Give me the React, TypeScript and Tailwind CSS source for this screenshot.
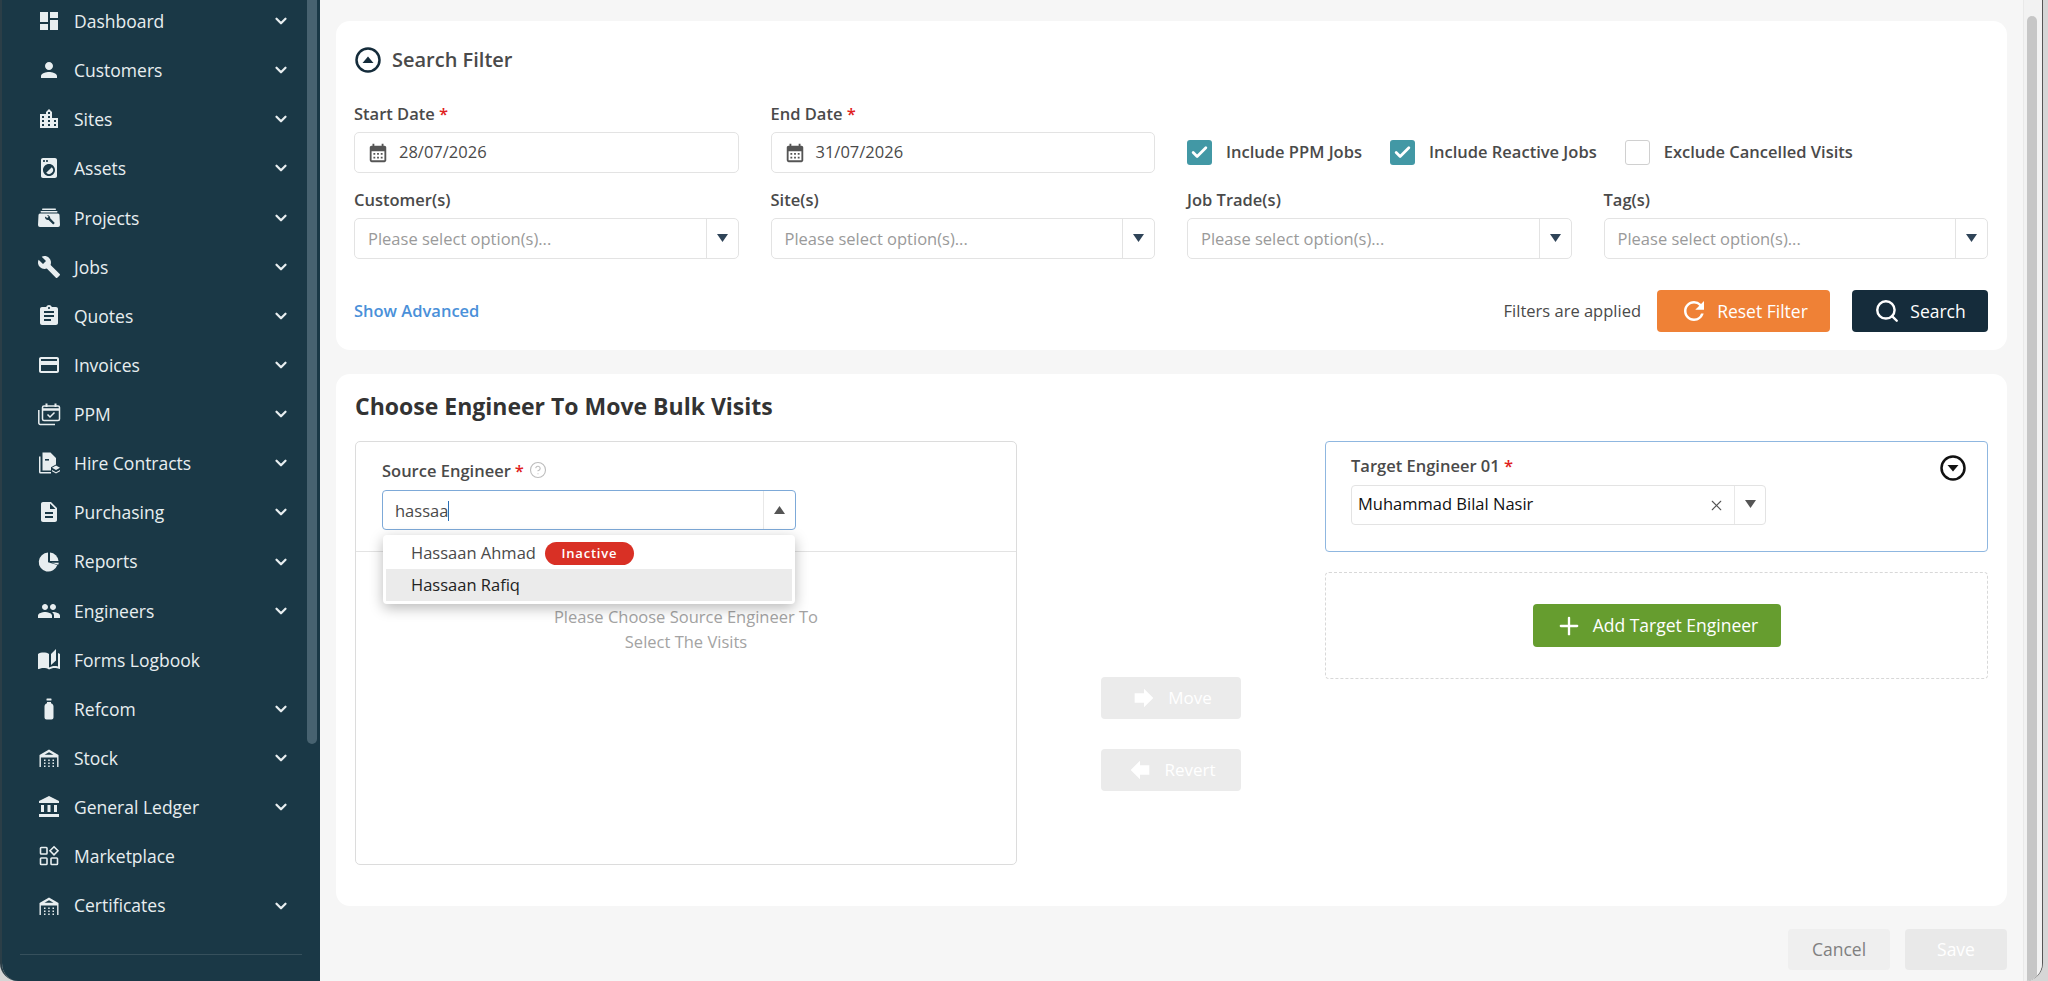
import type { ReactNode } from 'react'
import { Check, ChevronDown, CircleHelp, Plus, Search, X } from 'lucide-react'
import {
  MdAccountBalance,
  MdAssignment,
  MdAutoStories,
  MdBuild,
  MdCalendarMonth,
  MdCreditCard,
  MdDashboard,
  MdDescription,
  MdForward,
  MdLocalLaundryService,
  MdLocationCity,
  MdPeople,
  MdPerson,
  MdRefresh,
} from 'react-icons/md'

const FONT = "font-['Open_Sans','Noto_Sans',sans-serif]"

function ProjectsIcon() {
  return (
    <svg width="24" height="24" viewBox="0 0 24 24" fill="currentColor">
      <rect x="5" y="2.500" width="14" height="1.400" rx=".7" />
      <rect x="3.500" y="5" width="17" height="1.400" rx=".7" />
      <path d="M3 7.500h18a1.500 1.500 0 0 1 1.500 1.500l.5 10a2 2 0 0 1-2 2H3a2 2 0 0 1-2-2l.5-10A1.500 1.500 0 0 1 3 7.500z" />
      <path d="M8 10.500a3 3 0 0 0 3.600 3.400l4.600 4.600 1.600-1.600-4.600-4.600A3 3 0 0 0 10 9l1.600 1.800-1.300 1.300z" fill="#1a3846" />
    </svg>
  )
}

function PpmIcon() {
  return (
    <svg width="24" height="24" viewBox="0 0 24 24" fill="none" stroke="currentColor" strokeWidth="1.500">
      <rect x="5.500" y="4" width="17" height="14.500" rx="1.500" />
      <path d="M5.500 7.500h17" strokeWidth="2.500" />
      <path d="M9.500 1.500V5M18.500 1.500V5" strokeWidth="2" />
      <path d="M10.500 12.500l2.500 2.500 4.500-4.500" />
      <path d="M1.800 8v13a1.400 1.400 0 0 0 1.400 1.400H18" />
    </svg>
  )
}

function HireIcon() {
  return (
    <svg width="24" height="24" viewBox="0 0 24 24" fill="currentColor">
      <path d="M5.500 1.500h8l5.500 5.500v6.500l-5 2.800v3.200H5.500z" />
      <path d="M8 8h4v1.600H8z" fill="#1a3846" />
      <path d="M2 5.500h1.500V21H14v1.500H3.500A1.500 1.500 0 0 1 2 21z" />
      <path d="M19 14.500l4 2.300-4 2.300-4-2.300zM15 19l4 2.300 4-2.300v1.200l-4 2.300-4-2.300z" />
    </svg>
  )
}

function BottleIcon() {
  return (
    <svg width="24" height="24" viewBox="0 0 24 24" fill="currentColor">
      <rect x="9.500" y="1.500" width="5" height="2" rx=".5" />
      <path d="M10 4.500h4v1.200c1.600.6 2.500 1.800 2.500 3.300v11a2 2 0 0 1-2 2h-5a2 2 0 0 1-2-2V9c0-1.500.9-2.700 2.500-3.300z" transform="translate(0 .5)" />
    </svg>
  )
}

function WarehouseIcon() {
  return (
    <svg width="24" height="24" viewBox="0 0 24 24" fill="currentColor">
      <path d="M2.500 9 12 3.500 21.500 9v12h-1.400V11.500H3.900V21H2.500z" />
      <path d="M7.500 8.800 12 6.300l4.500 2.500z" fill="#1a3846" />
      <path d="M7 10h10v1H7z" />
      <path d="M7 13.500h1.500V15H7zM11.200 13.500h1.500V15h-1.500zM15.500 13.500H17V15h-1.500zM7 16.500h1.500V18H7zM11.200 16.500h1.500V18h-1.500zM15.500 16.500H17V18h-1.500zM7 19.500h1.500V21H7zM11.200 19.500h1.500V21h-1.500zM15.500 19.500H17V21h-1.500z" />
    </svg>
  )
}

function MarketplaceIcon() {
  return (
    <svg width="24" height="24" viewBox="0 0 24 24" fill="none" stroke="currentColor" strokeWidth="1.600">
      <rect x="3.500" y="3.500" width="6.500" height="6.500" rx=".8" />
      <path d="M17 2.800l4 4-4 4-4-4z" />
      <rect x="3.500" y="14" width="6.500" height="6.500" rx=".8" />
      <rect x="14" y="14" width="6.500" height="6.500" rx=".8" />
    </svg>
  )
}

function ReportsIcon() {
  return (
    <svg width="24" height="24" viewBox="0 0 24 24" fill="currentColor">
      <path d="M11 2.600a9.500 9.500 0 1 0 9.300 12.500L11 12.200z" />
      <path d="M13 2.500A9.500 9.500 0 0 1 21.500 11H13z" />
      <path d="M14.500 12.800h7.300l-.6 1.900z" />
    </svg>
  )
}

const navItems: { label: string; icon: ReactNode; arrow?: boolean }[] = [
  { label: 'Dashboard', icon: <MdDashboard size={24} />, arrow: true },
  { label: 'Customers', icon: <MdPerson size={24} />, arrow: true },
  { label: 'Sites', icon: <MdLocationCity size={24} />, arrow: true },
  { label: 'Assets', icon: <MdLocalLaundryService size={24} />, arrow: true },
  { label: 'Projects', icon: <ProjectsIcon />, arrow: true },
  { label: 'Jobs', icon: <MdBuild size={24} />, arrow: true },
  { label: 'Quotes', icon: <MdAssignment size={24} />, arrow: true },
  { label: 'Invoices', icon: <MdCreditCard size={24} />, arrow: true },
  { label: 'PPM', icon: <PpmIcon />, arrow: true },
  { label: 'Hire Contracts', icon: <HireIcon />, arrow: true },
  { label: 'Purchasing', icon: <MdDescription size={24} />, arrow: true },
  { label: 'Reports', icon: <ReportsIcon />, arrow: true },
  { label: 'Engineers', icon: <MdPeople size={24} />, arrow: true },
  { label: 'Forms Logbook', icon: <MdAutoStories size={24} /> },
  { label: 'Refcom', icon: <BottleIcon />, arrow: true },
  { label: 'Stock', icon: <WarehouseIcon />, arrow: true },
  { label: 'General Ledger', icon: <MdAccountBalance size={24} />, arrow: true },
  { label: 'Marketplace', icon: <MarketplaceIcon /> },
  { label: 'Certificates', icon: <WarehouseIcon />, arrow: true },
]

function Sidebar() {
  return (
    <aside className="relative flex h-full w-[318px] shrink-0 flex-col overflow-hidden bg-[#1a3846] text-[#e8eef0]">
      <nav className="-mt-[3.5px] flex flex-col">
        {navItems.map((item) => (
          <div key={item.label} className="flex h-[49.15px] shrink-0 items-center pl-[35px] pr-[30px]">
            <span className="flex w-6 shrink-0 justify-center">{item.icon}</span>
            <span className="ml-[13px] flex-1 text-[17.5px]">{item.label}</span>
            {item.arrow && <ChevronDown size={18} strokeWidth={3} />}
          </div>
        ))}
      </nav>
      <div className="mx-[18px] mt-[24px] border-t border-[#36505c]" />
      {/* sidebar scrollbar */}
      <div className="absolute right-[3px] top-0 h-[744px] w-[10px] rounded-b-[5px] bg-[#476270]" />
    </aside>
  )
}

function Label({ children, required }: { children: ReactNode; required?: boolean }) {
  return (
    <div className="mb-2 h-5 text-[16.5px] font-semibold leading-5 text-[#4a4a4a]">
      {children}
      {required && <span className="text-[#e02020]"> *</span>}
    </div>
  )
}

function Caret({ up, color = '#2f4458' }: { up?: boolean; color?: string }) {
  return (
    <svg width="11" height="8" viewBox="0 0 11 8" className={up ? 'rotate-180' : '-translate-y-px'}>
      <path d="M0 0h11L5.500 8z" fill={color} />
    </svg>
  )
}

function DateField({ label, value }: { label: string; value: string }) {
  return (
    <div>
      <Label required>{label}</Label>
      <div className="flex h-[41px] items-center rounded-[5px] border border-[#e3e3e3] pl-[12px]">
        <MdCalendarMonth size={22} className="text-[#555]" />
        <span className="ml-[10px] text-[16.5px] text-[#4a4a4a]">{value}</span>
      </div>
    </div>
  )
}

function MultiSelect({ label }: { label: string }) {
  return (
    <div>
      <Label>{label}</Label>
      <div className="flex h-[41px] items-center rounded-[5px] border border-[#e3e3e3]">
        <span className="flex-1 pl-[13px] pt-[2px] text-[16.5px] text-[#9a9a9a]">Please select option(s)...</span>
        <span className="flex h-full w-[32px] items-center justify-center border-l border-[#e3e3e3]">
          <Caret />
        </span>
      </div>
    </div>
  )
}

function CheckItem({ label, checked }: { label: string; checked?: boolean }) {
  return (
    <div className="flex items-center gap-[14px]">
      <span
        className={
          checked
            ? 'flex size-[25px] items-center justify-center rounded-[3px] bg-[#4298a5] text-white'
            : 'size-[25px] rounded-[3px] border border-[#d0d0d0] bg-white'
        }
      >
        {checked && <Check size={19} strokeWidth={3.5} />}
      </span>
      <span className="text-[16.5px] font-semibold text-[#4a4a4a]">{label}</span>
    </div>
  )
}

function SearchFilter() {
  return (
    <section className="rounded-[14px] bg-white pb-[18px] pl-[18px] pr-[19px] pt-[26px]">
      <div className="ml-px flex h-[26px] items-center gap-[11px] text-[#152c3b]">
        <svg width="26" height="26" viewBox="0 0 26 26" className="shrink-0">
          <circle cx="13" cy="13" r="11.500" fill="none" stroke="currentColor" strokeWidth="2.500" />
          <path d="M7.500 16h11L13 9.500z" fill="currentColor" />
        </svg>
        <h2 className="text-xl font-semibold text-[#4a4a4a]">Search Filter</h2>
      </div>
      <div className="mt-[31px] grid grid-cols-4 gap-x-8 gap-y-[17px]">
        <DateField label="Start Date" value="28/07/2026" />
        <DateField label="End Date" value="31/07/2026" />
        <div className="col-span-2 flex items-center gap-[28px] pt-[28px]">
          <CheckItem label="Include PPM Jobs" checked />
          <CheckItem label="Include Reactive Jobs" checked />
          <CheckItem label="Exclude Cancelled Visits" />
        </div>
        <MultiSelect label="Customer(s)" />
        <MultiSelect label="Site(s)" />
        <MultiSelect label="Job Trade(s)" />
        <MultiSelect label="Tag(s)" />
      </div>
      <div className="mt-[31px] flex h-[42px] items-center">
        <span className="text-[16.5px] font-semibold text-[#4a90d9]">Show Advanced</span>
        <span className="ml-auto text-[16.5px] text-[#4a4a4a]">Filters are applied</span>
        <button className="ml-[16px] flex h-[42px] w-[173px] items-center justify-center gap-[8px] rounded-[4px] bg-[#ef8136] text-[17.5px] font-medium text-white">
          <MdRefresh size={30} />
          Reset Filter
        </button>
        <button className="ml-[22px] flex h-[42px] w-[136px] items-center justify-center gap-[10px] rounded-[4px] bg-[#152c3b] text-[17.5px] font-medium text-white">
          <Search size={26} strokeWidth={2.25} />
          Search
        </button>
      </div>
    </section>
  )
}

function SourcePanel() {
  return (
    <div className="flex h-[424px] flex-col rounded-[5px] border border-[#dcdcdc]">
      <div className="relative h-[110px] shrink-0 border-b border-[#e3e3e3] px-[26px] pt-[19px]">
        <div className="flex h-5 items-center text-[16.5px] font-semibold leading-5 text-[#4a4a4a]">
          Source Engineer<span className="ml-1 text-[#e02020]">*</span>
          <CircleHelp size={18} strokeWidth={1.500} className="ml-[5px] -translate-y-px text-[#bdbdbd]" />
        </div>
        <div className="mt-[9px] flex h-[40px] w-[414px] items-center rounded-[4px] border border-[#7da9d8]">
          <span className="flex-1 pl-[12px] text-[16.5px] text-[#4a4a4a]">
            hassaa<span className="inline-block h-[20px] w-px translate-y-[4px] bg-[#2a6fb5]" />
          </span>
          <span className="flex h-full w-[32px] items-center justify-center border-l border-[#e8e8e8]">
            <Caret up color="#555" />
          </span>
        </div>
        {/* open dropdown lies over the panel */}
        <div className="absolute left-[27px] top-[93px] z-10 w-[412px] rounded-[4px] bg-white p-[3px] shadow-[0_4px_14px_rgba(0,0,0,0.28)]">
          <div className="flex h-[31px] items-center pl-[25px] text-[16.5px] text-[#4a4a4a]">
            Hassaan Ahmad
            <span className="ml-[9px] flex h-[23px] w-[89px] items-center justify-center rounded-full bg-[#d93025] text-[13px] font-semibold tracking-[0.06em] text-white">
              Inactive
            </span>
          </div>
          <div className="flex h-[32px] items-center bg-[#ebebeb] pl-[25px] text-[16.5px] text-[#222]">Hassaan Rafiq</div>
        </div>
      </div>
      <p className="mx-auto mt-[52px] w-[290px] text-center text-[16.5px] leading-[25px] text-[#a3a3a3]">
        Please Choose Source Engineer To Select The Visits
      </p>
    </div>
  )
}

function MoveButtons() {
  return (
    <div className="flex flex-col items-center justify-end gap-[30px] pb-[74px]">
      <button className="flex h-[42px] w-[140px] items-center justify-center gap-[10px] rounded-[4px] bg-[#ebebeb] text-[17px] font-medium text-white">
        <MdForward size={28} />
        Move
      </button>
      <button className="flex h-[42px] w-[140px] items-center justify-center gap-[10px] rounded-[4px] bg-[#ebebeb] text-[17px] font-medium text-white">
        <MdForward size={28} className="rotate-180" />
        Revert
      </button>
    </div>
  )
}

function TargetPanel() {
  return (
    <div className="flex flex-col gap-[20px]">
      <div className="relative h-[111px] rounded-[4px] border border-[#8fb7e0] pl-[25px] pt-[14px]">
        <div className="h-5 text-[16.5px] font-semibold leading-5 text-[#4a4a4a]">
          Target Engineer 01 <span className="text-[#e02020]">*</span>
        </div>
        <div className="mt-[9px] flex h-[40px] w-[415px] items-center rounded-[4px] border border-[#e3e3e3]">
          <span className="flex-1 pb-[2px] pl-[6px] text-[16.5px] text-[#111]">Muhammad Bilal Nasir</span>
          <X size={17} strokeWidth={1.500} className="mr-[9px] text-[#555]" />
          <span className="flex h-full w-[31px] items-center justify-center border-l border-[#e8e8e8]">
            <Caret color="#555" />
          </span>
        </div>
        <svg width="26" height="26" viewBox="0 0 26 26" className="absolute right-[21px] top-[13px]">
          <circle cx="13" cy="13" r="11.500" fill="none" stroke="#111" strokeWidth="2.500" />
          <path d="M7.500 10h11L13 16.500z" fill="#111" />
        </svg>
      </div>
      <div className="flex h-[107px] items-center justify-center rounded-[4px] border border-dashed border-[#d8d8d8]">
        <button className="flex h-[43px] w-[248px] items-center justify-center gap-[10px] rounded-[4px] bg-[#669d2f] text-[17.5px] font-medium text-white">
          <Plus size={28} strokeWidth={2} />
          Add Target Engineer
        </button>
      </div>
    </div>
  )
}

export default function App() {
  return (
    <div className={`${FONT} h-screen w-screen overflow-hidden bg-[#d6d6d6]`}>
      <div className="flex h-full w-[2043px] overflow-hidden rounded-b-[18px] border-l-2 border-r border-l-[#2b3e47] border-r-[#555]">
        <Sidebar />
        <main className="flex min-w-0 flex-1 flex-col bg-[#f6f6f6] px-4 pt-[21px]">
          <SearchFilter />
          <section className="mt-[24px] flex h-[532px] flex-col rounded-[14px] bg-white pl-[19px] pr-[19px] pt-[17px]">
            <h1 className="h-[30px] text-[23px] font-bold leading-[30px] text-[#333]">Choose Engineer To Move Bulk Visits</h1>
            <div className="mt-[20px] grid grid-cols-[662px_1fr_663px]">
              <SourcePanel />
              <MoveButtons />
              <TargetPanel />
            </div>
          </section>
          <div className="mt-[23px] flex justify-end gap-[15px]">
            <button className="h-[41px] w-[102px] rounded-[4px] bg-[#efefef] text-[17.5px] text-[#808080]">Cancel</button>
            <button className="h-[41px] w-[102px] rounded-[4px] bg-[#e9e9e9] text-[17.5px] text-white">Save</button>
          </div>
        </main>
        {/* page scrollbar */}
        <div className="h-full w-[19px] shrink-0 border-l border-[#e9e9e9] bg-[#f2f2f2] pl-[3px] pt-4">
          <div className="h-full w-[10px] rounded-t-[5px] bg-[#c6c6c6]" />
        </div>
      </div>
    </div>
  )
}
